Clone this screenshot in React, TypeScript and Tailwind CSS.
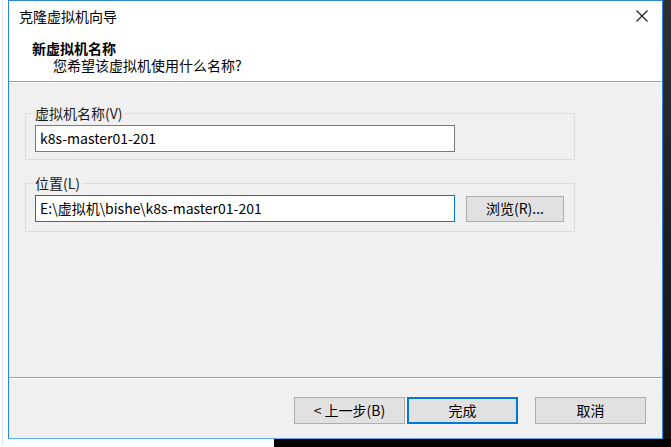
import React from 'react';

const font = { fontFamily: '"Noto Sans CJK SC", "Noto Sans", sans-serif' };

const CloseIcon = () => (
  <svg width="12" height="12" viewBox="0 0 12 12" className="block">
    <path d="M0.5 0.5 L11.5 11.5 M11.5 0.5 L0.5 11.5" stroke="#1a1a1a" strokeWidth="1.1" fill="none" />
  </svg>
);

const WizButton = ({ label, primary }: { label: string; primary?: boolean }) => (
  <button
    type="button"
    className={
      'h-[27px] w-[111px] bg-[#e1e1e1] text-[14px] text-black flex items-center justify-center ' +
      (primary ? 'border-2 border-[#0078d7]' : 'border border-[#adadad]')
    }
  >
    {label}
  </button>
);

export default function App() {
  return (
    <div className="w-[671px] h-[447px] bg-white flex flex-col overflow-hidden text-black" style={font}>
      <div className="flex h-[439px]">
        {/* desktop strip on the left */}
        <div className="w-[8px] flex">
          <div className="w-[2px]" />
          <div className="w-px bg-[#dfe8f3]" />
        </div>

        {/* wizard window */}
        <div className="w-[655px] flex flex-col border border-[#2a86d6] border-b-[#5eaaec]">
          <div className="h-[80px] bg-white">
            <div className="h-[30px] flex items-center justify-between pl-[10px] pr-[14px]">
              <span className="text-[14px] leading-none">克隆虚拟机向导</span>
              <CloseIcon />
            </div>
            <div className="pt-[9px] pl-[23px] text-[14px] font-bold leading-[17px]">新虚拟机名称</div>
            <div className="pl-[44px] text-[14px] leading-[17px]">您希望该虚拟机使用什么名称?</div>
          </div>
          <div className="h-px bg-[#a0a0a0]" />
          <div className="h-px bg-white" />

          <div className="h-[294px] bg-[#f0f0f0] pl-[16px] pt-[22px]">
            <fieldset className="w-[550px] border border-[#dcdcdc] pl-[9px] pt-[4px] pb-[7px]">
              <legend className="-ml-[2px] px-[2px] text-[14px] leading-[16px] text-[#1a1a1a]">虚拟机名称(V)</legend>
              <div className="w-[420px] h-[27px] bg-white border border-[#7a7a7a] flex items-center pl-[4px] text-[14px]">
                k8s-master01-201
              </div>
            </fieldset>

            <fieldset className="mt-[15px] w-[550px] border border-[#dcdcdc] pl-[9px] pt-[4px] pb-[9px]">
              <legend className="-ml-[2px] px-[2px] text-[14px] leading-[16px] text-[#1a1a1a]">位置(L)</legend>
              <div className="flex items-center">
                <div className="w-[420px] h-[27px] bg-white border border-[#0078d7] flex items-center pl-[4px] text-[14px]">
                  E:\虚拟机\bishe\k8s-master01-201
                </div>
                <button
                  type="button"
                  className="ml-[11px] w-[98px] h-[26px] bg-[#e1e1e1] border border-[#adadad] text-[14px] flex items-center justify-center"
                >
                  浏览(R)...
                </button>
              </div>
            </fieldset>
          </div>

          <div className="h-px bg-[#a0a0a0]" />
          <div className="h-px bg-white" />

          <div className="flex-1 bg-[#f0f0f0] flex justify-end items-start pt-[18px] pr-[16px]">
            <WizButton label="< 上一步(B)" />
            <div className="ml-[2px]">
              <WizButton label="完成" primary />
            </div>
            <div className="ml-[17px]">
              <WizButton label="取消" />
            </div>
          </div>
        </div>

        {/* desktop strip on the right */}
        <div className="flex-1 bg-gradient-to-b from-[#303030] to-[#121212]" />
      </div>

      <div className="flex flex-1">
        <div className="w-[274px] flex">
          <div className="w-[2px]" />
          <div className="w-px bg-[#dfe8f3] h-[6px]" />
        </div>
        <div className="flex-1 bg-black" />
      </div>
    </div>
  );
}
